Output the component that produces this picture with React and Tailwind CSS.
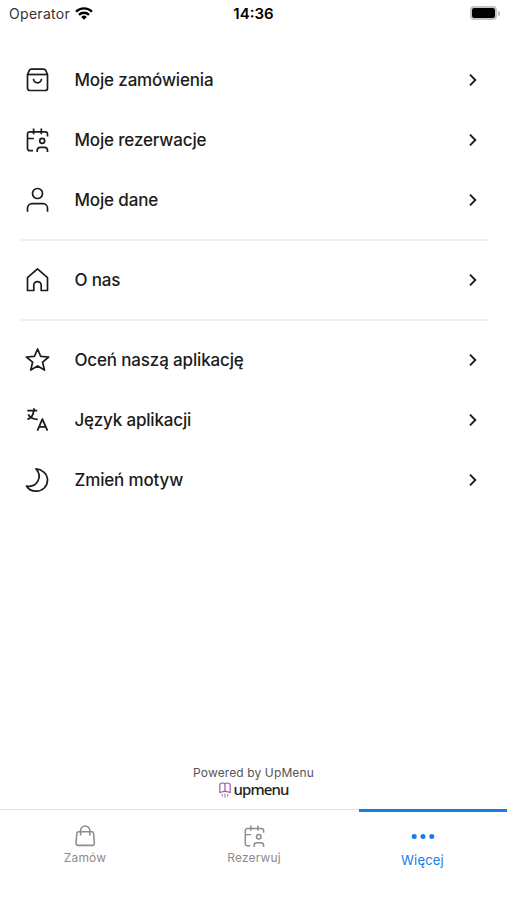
import { useState } from 'react'

function Icon({ size = 24, strokeWidth = 1.7, children }) {
  return (
    <svg
      width={size}
      height={size}
      viewBox="0 0 24 24"
      fill="none"
      stroke="currentColor"
      strokeWidth={strokeWidth}
      strokeLinejoin="round"
      className="shrink-0 overflow-visible"
    >
      {children}
    </svg>
  )
}

const OrdersIcon = () => (
  <Icon>
    <path d="M2.500 6.500v13.700a2.300 2.300 0 0 0 2.300 2.300h15.400a2.300 2.300 0 0 0 2.300-2.300V6.500l-1.700-3.800A2.500 2.500 0 0 0 18.500 1.200h-12A2.500 2.500 0 0 0 4.200 2.700L2.500 6.500Z" />
    <path d="M2.500 6.500h20" />
    <path d="M8.500 10.800a4 4 0 0 0 8 0" />
  </Icon>
)

const BookingIcon = ({ size, strokeWidth }) => (
  <Icon size={size} strokeWidth={strokeWidth}>
    <path d="M8 22.700H4.800A2.300 2.300 0 0 1 2.500 20.400V6.100a2.300 2.300 0 0 1 2.300-2.300h15.400A2.300 2.300 0 0 1 22.500 6.100v2.400" />
    <path d="M8.600 0.500v5.700M16.300 0.500v5.700M2.500 10.500h6.400" />
    <circle cx="17.200" cy="12.800" r="2.500" />
    <path d="M12.200 24v-1.600a3 3 0 0 1 3-3h4.300a3 3 0 0 1 3 3V24" />
  </Icon>
)

const UserIcon = () => (
  <Icon>
    <circle cx="12.500" cy="5.500" r="5" />
    <path d="M2.500 23.700v-3.600a4.400 4.400 0 0 1 4.400-4.400h11.200a4.400 4.400 0 0 1 4.400 4.400v3.600" />
  </Icon>
)

const HomeIcon = () => (
  <Icon>
    <path d="M2.500 22.500V9.700L12.500 0.800 22.500 9.700v12.800h-6.300v-5.200a3.700 3.700 0 0 0-7.400 0v5.200Z" />
  </Icon>
)

const StarIcon = () => (
  <Icon>
    <path d="M12.600 1l3.100 7.400 8 .6-6.100 5.200 1.900 7.900-6.900-4.200-6.900 4.200 1.900-7.900L1.400 9l8-.6Z" />
  </Icon>
)

const LanguageIcon = () => (
  <Icon strokeWidth={1.8}>
    <path d="M2.300 2.700h10M9 .2v2.500M8.700 2.700C8.500 6.800 6.500 9.700 2.500 11.300M3.200 6.300c1.500 2.900 4.600 4.800 9.500 5.100" />
    <path d="M12.400 22.700l5-11.600 5 11.600M14 18.800h6.800" />
  </Icon>
)

const MoonIcon = () => (
  <Icon>
    <path d="M11 .8c5.300.3 11.500 4.600 11.500 11.200 0 6.400-4.900 11.200-11.200 11.200-4.300 0-7.900-1.800-9.800-5.200 4.900.9 9.200-.9 11.300-4.800 2.300-4.300 1.500-8.900-1.800-12.400Z" />
  </Icon>
)

const BagIcon = () => (
  <Icon size={22} strokeWidth={1.7}>
    <path d="M4.900 7.400h14.600a1.800 1.800 0 0 1 1.800 1.600l.9 11a2 2 0 0 1-2 2.200h-16a2 2 0 0 1-2-2.200L3.100 9a1.800 1.800 0 0 1 1.800-1.600Z" />
    <path d="M7.200 11.500V6a5 5 0 0 1 10 0v5.500" />
  </Icon>
)

const groups = [
  [
    { label: 'Moje zamówienia', icon: OrdersIcon },
    { label: 'Moje rezerwacje', icon: BookingIcon },
    { label: 'Moje dane', icon: UserIcon },
  ],
  [{ label: 'O nas', icon: HomeIcon }],
  [
    { label: 'Oceń naszą aplikację', icon: StarIcon },
    { label: 'Język aplikacji', icon: LanguageIcon },
    { label: 'Zmień motyw', icon: MoonIcon },
  ],
]

function StatusBar() {
  return (
    <header className="grid h-[50px] grid-cols-3 items-start pl-[9px] pr-[7px] pt-[3px] text-black">
      <div className="flex h-5 items-center gap-[6px] text-[14px] tracking-[0.3px] text-[#333]">
        Operator
        <svg width="18" height="13" viewBox="0 0 18 13" fill="none" stroke="#000" strokeWidth="2.4" className="-ml-px">
          <path d="M1 4.600a11.500 11.500 0 0 1 16 0M4 7.800a7.200 7.200 0 0 1 10 0" />
          <path d="M9 12.700 6.200 9.900a4 4 0 0 1 5.600 0Z" fill="#000" stroke="none" />
        </svg>
      </div>
      <div className="pt-px pr-[2px] text-center text-[15px] font-semibold leading-5">14:36</div>
      <div className="flex h-5 items-center justify-end">
        <div className="h-[14px] w-[27px] rounded-[4px] border-2 border-[#c4c4c4]">
          <div className="h-full rounded-[2px] bg-black" />
        </div>
        <div className="ml-px h-[5px] w-[2px] rounded-r-full bg-[#bbb]" />
      </div>
    </header>
  )
}

function MenuRow({ label, icon: ItemIcon }) {
  return (
    <button className="flex h-[60px] w-full items-center pl-[25px] pr-[29px] text-left text-[#1b1b1b]">
      <ItemIcon />
      <span className="ml-[25.5px] flex-1 pt-[2px] text-[17px] font-medium tracking-[-0.16px]">{label}</span>
      <svg width="10" height="14" viewBox="0 0 10 14" fill="none" stroke="currentColor" strokeWidth="1.9">
        <path d="M2 1.700 7.300 7 2 12.300" />
      </svg>
    </button>
  )
}

function PoweredBy() {
  return (
    <div className="flex flex-col items-center pb-[11px]">
      <p className="text-[12px] leading-4 tracking-[0.12px] text-[#555]">Powered by UpMenu</p>
      <div className="flex h-[17px] items-center gap-[3px]">
        <svg width="12" height="16" viewBox="0 0 12 16" fill="none" stroke="#9b59ab" strokeWidth="1.2">
          <path d="M.8 10.500V3.500Q.8 1 3.300 1 5 1 6 2 7 1 8.700 1q2.500 0 2.500 2.500v7L6 9.200ZM6 2v7.200" />
          <path d="M3.300 12v2.500M6 11.500v4M8.700 12v2.500" strokeWidth=".9" />
        </svg>
        <span className="font-['Noto_Sans',sans-serif] text-[15px] font-medium leading-[17px] tracking-[-0.9px] text-[#222]">
          upmenu
        </span>
      </div>
    </div>
  )
}

function TabBar() {
  const [active, setActive] = useState('more')
  const tabs = [
    { id: 'order', label: 'Zamów', icon: <BagIcon /> },
    { id: 'book', label: 'Rezerwuj', icon: <BookingIcon size={22} strokeWidth={1.6} /> },
    {
      id: 'more',
      label: 'Więcej',
      icon: (
        <svg width="24" height="22" viewBox="0 0 24 22" fill="currentColor">
          <circle cx="3.200" cy="10.500" r="2.500" />
          <circle cx="12" cy="10.500" r="2.500" />
          <circle cx="20.800" cy="10.500" r="2.500" />
        </svg>
      ),
    },
  ]

  return (
    <nav className="grid h-[91px] grid-cols-[170px_1fr_169px] border-t border-[#e4e4e4]">
      {tabs.map((tab) => (
        <button
          key={tab.id}
          onClick={() => setActive(tab.id)}
          className={
            tab.id === active
              ? 'relative flex flex-col items-center pt-[16px] text-[13px] tracking-[0.2px] text-[#1a7ce8]'
              : 'relative flex flex-col items-center pt-[15px] text-[12px] tracking-[0.15px] text-[#8c8c8c]'
          }
        >
          {tab.id === active && (
            <span className="absolute -top-px right-0 h-[3px] w-[148px] bg-[#1a7ce8]" />
          )}
          {tab.icon}
          <span className={tab.id === active ? 'mt-1 leading-4' : 'mt-[3px] leading-4'}>{tab.label}</span>
        </button>
      ))}
    </nav>
  )
}

function App() {
  return (
    <div className="flex h-screen w-full flex-col overflow-hidden bg-white font-['Inter',sans-serif]">
      <StatusBar />
      <main className="flex-1">
        {groups.map((items, idx) => (
          <section key={idx}>
            {idx > 0 && <hr className="my-[9px] ml-[21px] mr-[19px] border-t-2 border-[#f0f0f0]" />}
            {items.map((item) => (
              <MenuRow key={item.label} {...item} />
            ))}
          </section>
        ))}
      </main>
      <PoweredBy />
      <TabBar />
    </div>
  )
}

export default App
